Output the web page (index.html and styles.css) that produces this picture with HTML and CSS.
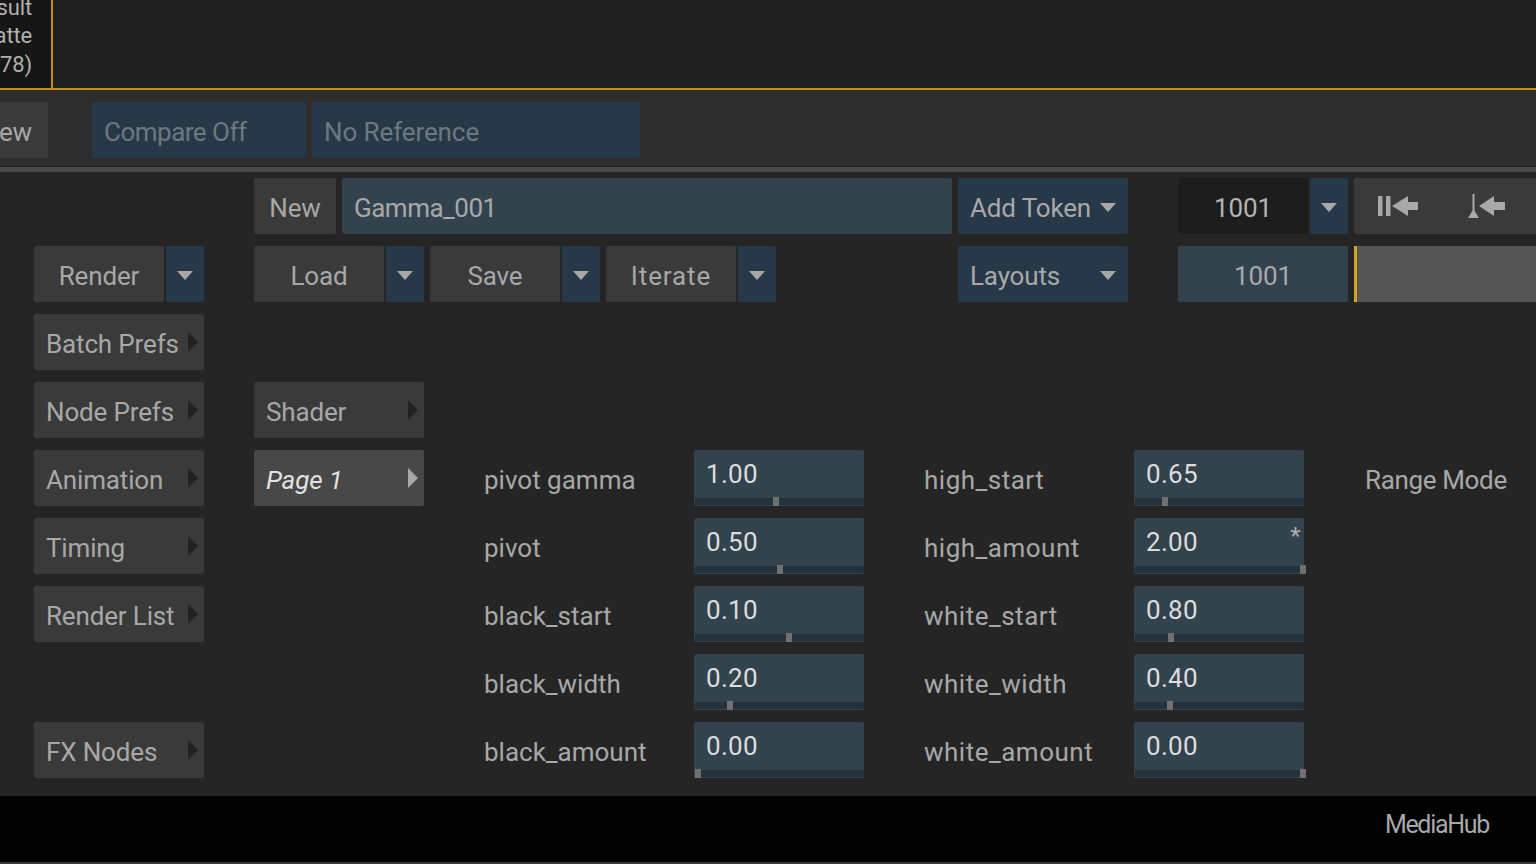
FILE: index.html
```html
<!DOCTYPE html>
<html lang="en">
<head>
    <meta charset="UTF-8">
    <title>Gamma_001</title>
    <link rel="stylesheet" href="styles.css">
</head>
<body>

    <!-- Viewer strip -->
    <div class="viewer">
        <div class="thumb">
            <div>sult</div>
            <div>atte</div>
            <div>78)</div>
        </div>
        <div class="viewport"></div>
    </div>

    <!-- Compare bar -->
    <div class="compare-bar">
        <div class="btn view-btn">ew</div>
        <div class="btn-blue dim compare-off">Compare Off</div>
        <div class="btn-blue dim no-ref">No Reference</div>
    </div>
    <div class="divider"></div>

    <div class="panel">
        <!-- Left menu column -->
        <div class="side">
            <div class="split">
                <div class="btn grow">Render</div>
                <div class="drop"><span class="tri"></span></div>
            </div>
            <div class="btn menu">Batch Prefs<span class="arrow"></span></div>
            <div class="btn menu">Node Prefs<span class="arrow"></span></div>
            <div class="btn menu">Animation<span class="arrow"></span></div>
            <div class="btn menu">Timing<span class="arrow"></span></div>
            <div class="btn menu">Render List<span class="arrow"></span></div>
            <div class="blank"></div>
            <div class="btn menu">FX Nodes<span class="arrow"></span></div>
        </div>

        <div class="work">
            <!-- Setup name row -->
            <div class="toolbar">
                <div class="btn new-btn">New</div>
                <div class="name-field">Gamma_001</div>
                <div class="btn-blue token">Add Token<span class="tri"></span></div>
                <div class="frame-group">
                    <div class="frame-box">1001</div>
                    <div class="drop frame-drop"><span class="tri"></span></div>
                </div>
                <div class="btn transport">
                    <svg class="icon-first" width="42" height="24" viewBox="0 0 42 24">
                        <path d="M0 2h4.500v20H0zM8 2h4.500v20H8zM14 12L30 2v6h10v8H30v6z" fill="#a8a8a8"/>
                    </svg>
                    <svg class="icon-in" width="38" height="26" viewBox="0 0 38 26">
                        <path d="M4.500 1h2v18h-2zM5.500 16l5.500 9H0zM11 13L26 3v6h11v8H26v6z" fill="#a8a8a8"/>
                    </svg>
                </div>
            </div>

            <!-- Load / save row -->
            <div class="toolbar">
                <div class="split">
                    <div class="btn grow">Load</div>
                    <div class="drop"><span class="tri"></span></div>
                </div>
                <div class="split">
                    <div class="btn grow">Save</div>
                    <div class="drop"><span class="tri"></span></div>
                </div>
                <div class="split">
                    <div class="btn grow iterate">Iterate</div>
                    <div class="drop"><span class="tri"></span></div>
                </div>
                <div class="btn-blue layouts">Layouts<span class="tri"></span></div>
                <div class="frame-value">1001</div>
                <div class="timeline"></div>
            </div>

            <div class="lower">
                <div class="pages">
                    <div class="btn menu">Shader<span class="arrow"></span></div>
                    <div class="btn menu current">Page 1<span class="arrow"></span></div>
                </div>

                <div class="params">
                    <div class="label">pivot gamma</div>
                    <div class="field">1.00<div class="handle" style="left: 79px"></div></div>
                    <div class="label col2">high_start</div>
                    <div class="field">0.65<div class="handle" style="left: 28px"></div></div>
                    <div class="label col3">Range Mode</div>

                    <div class="label">pivot</div>
                    <div class="field">0.50<div class="handle" style="left: 83px"></div></div>
                    <div class="label col2">high_amount</div>
                    <div class="field">2.00<span class="changed">*</span><div class="handle" style="left: 166px"></div></div>
                    <div></div>

                    <div class="label">black_start</div>
                    <div class="field">0.10<div class="handle" style="left: 92px"></div></div>
                    <div class="label col2">white_start</div>
                    <div class="field">0.80<div class="handle" style="left: 34px"></div></div>
                    <div></div>

                    <div class="label">black_width</div>
                    <div class="field">0.20<div class="handle" style="left: 33px"></div></div>
                    <div class="label col2">white_width</div>
                    <div class="field">0.40<div class="handle" style="left: 33px"></div></div>
                    <div></div>

                    <div class="label">black_amount</div>
                    <div class="field">0.00<div class="handle" style="left: 1px"></div></div>
                    <div class="label col2">white_amount</div>
                    <div class="field">0.00<div class="handle" style="left: 166px"></div></div>
                    <div></div>
                </div>
            </div>
        </div>
    </div>

    <div class="footer">MediaHub</div>

</body>
</html>
```

FILE: styles.css
```css
* {
    box-sizing: border-box;
}
body {
    margin: 0;
    width: 1536px;
    height: 864px;
    overflow: hidden;
    background-color: #252525;
    color: #a8a8a8;
    font-family: Roboto, sans-serif;
    font-size: 26px;
    letter-spacing: -0.15px;
    display: flex;
    flex-direction: column;
}

/* viewer */
.viewer {
    height: 90px;
    display: flex;
    flex-shrink: 0;
}
.thumb {
    width: 53px;
    padding: 0 19px 9px 0;
    background-color: #161616;
    border-right: 2px solid #c48a12;
    border-bottom: 2px solid #c48a12;
    font-size: 22px;
    line-height: 28.500px;
    display: flex;
    flex-direction: column;
    justify-content: flex-end;
    align-items: flex-end;
    overflow: hidden;
    color: #b0b0b0;
}
.viewport {
    flex: 1;
    background-color: #1f1f1f;
    border-bottom: 2px solid #c48a12;
}

/* compare bar */
.compare-bar {
    height: 76px;
    padding-top: 12px;
    background-color: #2d2d2d;
    display: flex;
    gap: 6px;
    flex-shrink: 0;
}
.compare-bar > div {
    height: 56px;
}
.view-btn {
    width: 48px;
    margin-right: 38px;
    justify-content: flex-end;
    padding-right: 17px;
    border-radius: 0 2px 2px 0;
}
.compare-off {
    width: 214px;
}
.no-ref {
    width: 328px;
}
.divider {
    height: 6px;
    flex-shrink: 0;
    background-color: #494949;
    border-top: 1px solid #1e1e1e;
}

/* shared controls */
.btn, .btn-blue, .drop, .name-field, .frame-box, .frame-value {
    height: 56px;
    display: flex;
    align-items: center;
    border-radius: 2px;
    padding-top: 4px;
}
.btn {
    background-color: #3a3a3a;
    justify-content: center;
}
.btn-blue {
    background-color: #273848;
    padding-left: 12px;
}
.dim {
    color: #6d7880;
    letter-spacing: -0.5px;
}
.no-ref.dim {
    letter-spacing: -0.1px;
}
.drop {
    width: 38px;
    flex-shrink: 0;
    margin-left: 2px;
    padding-top: 2px;
    background-color: #273848;
    justify-content: center;
}
.tri {
    width: 0;
    height: 0;
    border-left: 8px solid transparent;
    border-right: 8px solid transparent;
    border-top: 9px solid #a8a8a8;
}
.split {
    display: flex;
    width: 170px;
}
.grow {
    flex: 1;
}
.iterate {
    letter-spacing: 0.9px;
}
.menu {
    width: 170px;
    justify-content: flex-start;
    padding-left: 12px;
    position: relative;
}
.arrow {
    position: absolute;
    left: 154px;
    top: 18px;
    width: 0;
    height: 0;
    border-top: 10px solid transparent;
    border-bottom: 10px solid transparent;
    border-left: 10px solid #222222;
}
.current {
    background-color: #484848;
    color: #e2e2e2;
    font-style: italic;
}
.current .arrow {
    border-left-color: #a8a8a8;
}

/* layout */
.panel {
    flex: 1;
    display: flex;
    padding: 6px 0 0 34px;
}
.side {
    width: 170px;
    padding-top: 68px;
    display: flex;
    flex-direction: column;
    gap: 12px;
}
.blank {
    height: 56px;
}
.work {
    margin-left: 50px;
    flex: 1;
    display: flex;
    flex-direction: column;
    gap: 12px;
}
.toolbar {
    display: flex;
    gap: 6px;
    height: 56px;
}
.new-btn {
    width: 82px;
}
.name-field {
    width: 610px;
    padding-left: 12px;
    background-color: #33434e;
    letter-spacing: -0.5px;
}
.token, .layouts {
    width: 170px;
    position: relative;
}
.token .tri, .layouts .tri {
    position: absolute;
    right: 12px;
    top: 25px;
}
.layouts {
    margin-left: 176px;
}
.frame-group {
    display: flex;
    margin-left: 44px;
    width: 170px;
}
.frame-box {
    flex: 1;
    justify-content: center;
    background-color: #1d1d1d;
    color: #b4b4b4;
}
.frame-drop {
    margin-left: 2px;
}
.transport {
    width: 182px;
    padding-top: 0;
    justify-content: flex-start;
    border-radius: 2px 0 0 2px;
}
.icon-first {
    margin: 0 0 0 24px;
}
.icon-in {
    margin: 0 0 0 48px;
}
.frame-value {
    width: 170px;
    margin-left: 44px;
    justify-content: center;
    background-color: #33434e;
}
.timeline {
    width: 182px;
    height: 56px;
    background-color: #555555;
    border-left: 3px solid #d0a820;
}

/* parameters */
.lower {
    padding-top: 68px;
    display: flex;
}
.pages {
    width: 170px;
    display: flex;
    flex-direction: column;
    gap: 12px;
}
.params {
    margin: 68px 0 0 60px;
    display: grid;
    grid-template-columns: 210px 170px 270px 170px auto;
    grid-auto-rows: 56px;
    row-gap: 12px;
    align-items: stretch;
}
.label {
    padding-top: 12px;
    line-height: 36px;
    white-space: nowrap;
    letter-spacing: 0;
}
.col2 {
    padding-left: 60px;
    letter-spacing: 0.5px;
}
.col3 {
    padding-left: 61px;
    letter-spacing: -0.35px;
}
.field {
    position: relative;
    width: 170px;
    height: 56px;
    padding: 6px 0 0 12px;
    line-height: 36px;
    background-color: #33434e;
    border-radius: 2px;
    color: #dcdcdc;
    letter-spacing: 0.3px;
}
.field::after {
    content: "";
    position: absolute;
    left: 1px;
    right: 0;
    bottom: 1px;
    height: 7px;
    background-color: #24323c;
}
.handle {
    position: absolute;
    top: 47px;
    width: 6px;
    height: 9px;
    background-color: #707070;
    z-index: 1;
}
.changed {
    position: absolute;
    right: 3px;
    top: 0;
    font-size: 24px;
    color: #b0b0b0;
}

/* footer */
.footer {
    height: 68px;
    flex-shrink: 0;
    padding: 0 47px 9px 0;
    background-color: #000000;
    border-bottom: 2px solid #3a3a3a;
    display: flex;
    align-items: center;
    justify-content: flex-end;
    font-size: 25px;
    letter-spacing: -1.300px;
}
```
